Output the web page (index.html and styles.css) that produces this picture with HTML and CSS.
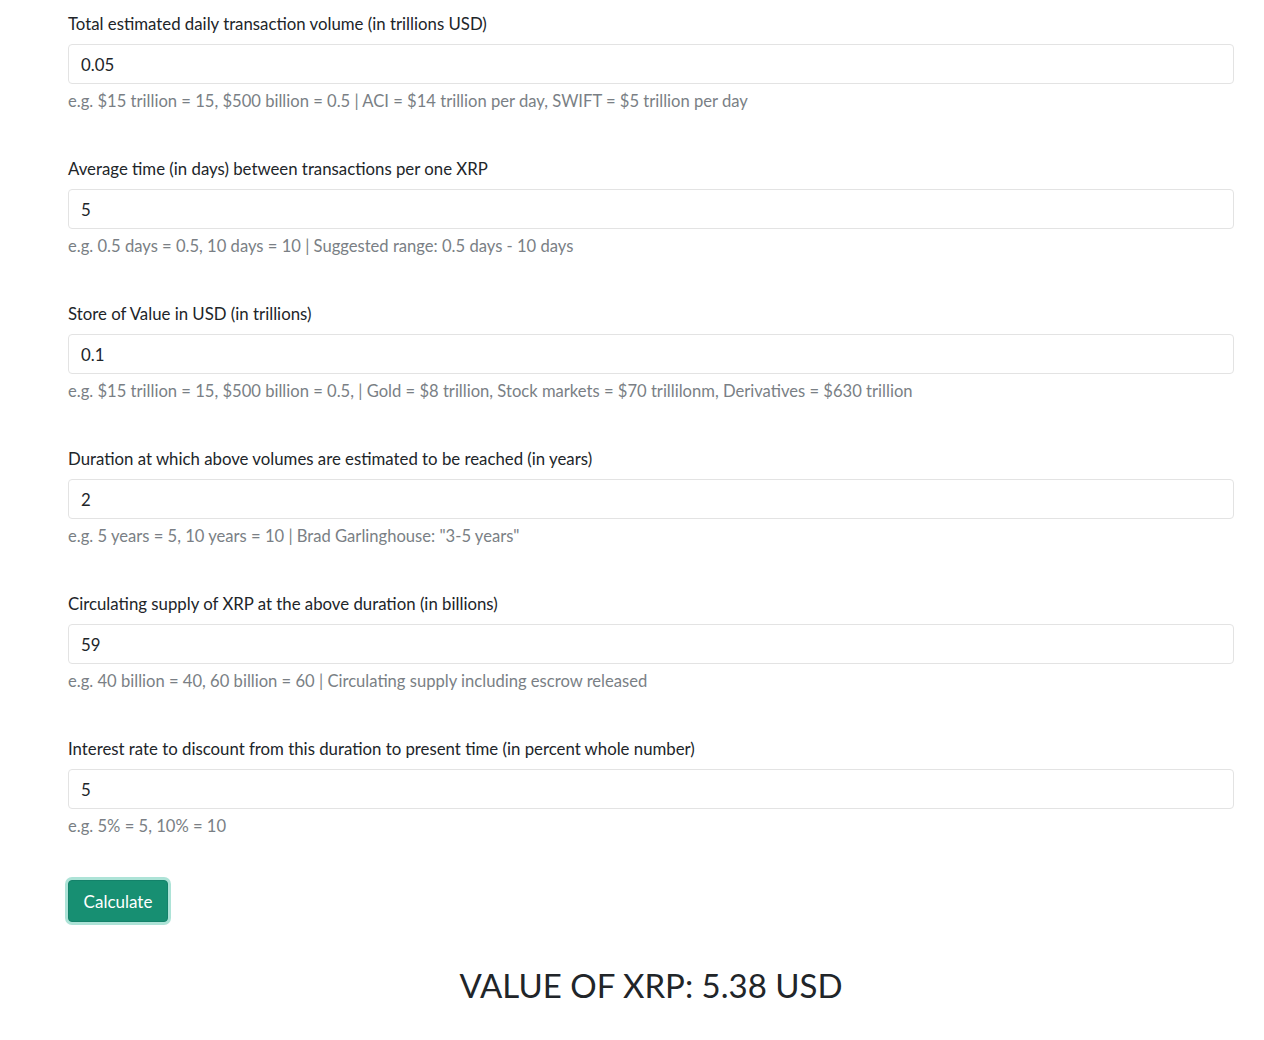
FILE: index.html
```html
<!DOCTYPE html>
<html lang="en">
<head>
    <meta charset="UTF-8">
    <meta name="viewport" content="width=device-width, initial-scale=1.0">
    <title>XRP Value Calculator</title>
    <link rel="stylesheet" href="styles.css">
</head>
<body>

    <!-- Calculator form -->
    <div class="container">
        <div class="form-group">
            <label for="volume">Total estimated daily transaction volume (in trillions USD)</label>
            <input type="text" id="volume" class="form-control" value="0.05">
            <small class="form-text">e.g. $15 trillion = 15, $500 billion = 0.5 | ACI = $14 trillion per day, SWIFT = $5 trillion per day</small>
        </div>

        <div class="form-group">
            <label for="velocity">Average time (in days) between transactions per one XRP</label>
            <input type="text" id="velocity" class="form-control" value="5">
            <small class="form-text">e.g. 0.5 days = 0.5, 10 days = 10 | Suggested range: 0.5 days - 10 days</small>
        </div>

        <div class="form-group">
            <label for="store">Store of Value in USD (in trillions)</label>
            <input type="text" id="store" class="form-control" value="0.1">
            <small class="form-text">e.g. $15 trillion = 15, $500 billion = 0.5, | Gold = $8 trillion, Stock markets = $70 trillilonm, Derivatives = $630 trillion</small>
        </div>

        <div class="form-group">
            <label for="duration">Duration at which above volumes are estimated to be reached (in years)</label>
            <input type="text" id="duration" class="form-control" value="2">
            <small class="form-text">e.g. 5 years = 5, 10 years = 10 | Brad Garlinghouse: "3-5 years"</small>
        </div>

        <div class="form-group">
            <label for="supply">Circulating supply of XRP at the above duration (in billions)</label>
            <input type="text" id="supply" class="form-control" value="59">
            <small class="form-text">e.g. 40 billion = 40, 60 billion = 60 | Circulating supply including escrow released</small>
        </div>

        <div class="form-group">
            <label for="rate">Interest rate to discount from this duration to present time (in percent whole number)</label>
            <input type="text" id="rate" class="form-control" value="5">
            <small class="form-text">e.g. 5% = 5, 10% = 10</small>
        </div>

        <button class="btn-calc">Calculate</button>

        <h2 class="result">VALUE OF XRP: 5.38 USD</h2>
    </div>

</body>
</html>
```

FILE: styles.css
```css
/* Reset */
* {
    margin: 0;
    padding: 0;
    box-sizing: border-box;
}

body {
    font-family: Lato, "Open Sans", Arial, sans-serif;
    color: #212529;
    background-color: #fff;
}

.container {
    width: 1166px;
    margin-left: 68px;
    padding-top: 12px;
}

/* Form groups */
.form-group {
    display: flex;
    flex-direction: column;
    margin-bottom: 44px;
}

.form-group label {
    font-size: 16.8px;
    line-height: 24px;
    margin-bottom: 8px;
}

.form-control {
    height: 40px;
    padding: 8px 12px;
    font-family: inherit;
    font-size: 16.8px;
    color: #212529;
    border: 1px solid #e3e3e3;
    border-radius: 4px;
    background-color: #fff;
}

.form-text {
    margin-top: 5px;
    font-size: 16.6px;
    line-height: 24px;
    color: #7a7f85;
}

/* Button */
.btn-calc {
    width: 100px;
    height: 42px;
    margin-top: -2px;
    font-family: inherit;
    font-size: 17px;
    color: #fff;
    background-color: #178f72;
    border: 1px solid #14826a;
    border-radius: 4px;
    box-shadow: 0 0 0 3px rgba(92, 200, 175, 0.5);
    cursor: pointer;
}

/* Result */
.result {
    margin-top: 43px;
    text-align: center;
    font-size: 33px;
    font-weight: 400;
    line-height: 40px;
    color: #212529;
}
```
